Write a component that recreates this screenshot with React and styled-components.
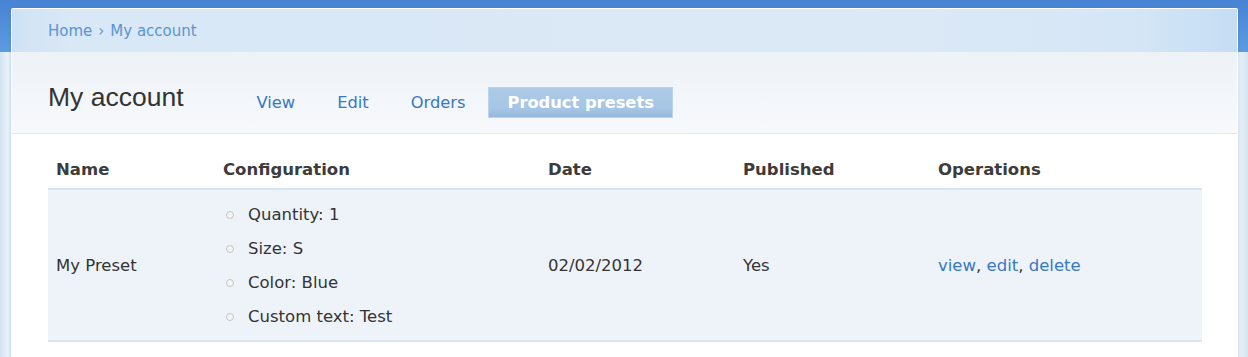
import React from "react"
import styled, {createGlobalStyle} from "styled-components"

const GlobalStyle = createGlobalStyle`
  html, body {
    margin: 0;
    padding: 0;
  }
  body {
    width: 1248px;
    height: 357px;
    overflow: hidden;
    font-family: "DejaVu Sans", Verdana, sans-serif;
    background: #e6eff7;
  }
`

const rows = [
  {
    name: "My Preset",
    config: ["Quantity: 1", "Size: S", "Color: Blue", "Custom text: Test"],
    date: "02/02/2012",
    published: "Yes",
  },
]

const App = () => {
  return (
    <>
      <GlobalStyle/>
      <Page>
        <Panel>
          <Breadcrumb>
            <Crumb href="#">Home</Crumb>
            <Sep>›</Sep>
            <Crumb href="#">My account</Crumb>
          </Breadcrumb>
          <Header>
            <Title>My account</Title>
            <Tabs>
              <Tab href="#">View</Tab>
              <Tab href="#">Edit</Tab>
              <Tab href="#">Orders</Tab>
              <Tab href="#" $active>Product presets</Tab>
            </Tabs>
          </Header>
          <Content>
            <Table>
              <colgroup>
                <col style={{width: "167px"}}/>
                <col style={{width: "325px"}}/>
                <col style={{width: "195px"}}/>
                <col style={{width: "195px"}}/>
                <col style={{width: "272px"}}/>
              </colgroup>
              <thead>
                <tr>
                  <Th>Name</Th>
                  <Th>Configuration</Th>
                  <Th>Date</Th>
                  <Th>Published</Th>
                  <Th>Operations</Th>
                </tr>
              </thead>
              <tbody>
                {rows.map((r) => (
                  <Row key={r.name}>
                    <Td>{r.name}</Td>
                    <Td>
                      <ConfigList>
                        {r.config.map((c) => <ConfigItem key={c}>{c}</ConfigItem>)}
                      </ConfigList>
                    </Td>
                    <Td>{r.date}</Td>
                    <Td>{r.published}</Td>
                    <Td>
                      <OpLink href="#">view</OpLink>, <OpLink href="#">edit</OpLink>, <OpLink href="#">delete</OpLink>
                    </Td>
                  </Row>
                ))}
              </tbody>
            </Table>
          </Content>
        </Panel>
      </Page>
    </>
  )
}

const Page = styled.div`
  width: 1248px;
  height: 357px;
  padding: 8px 10px 0 11px;
  box-sizing: border-box;
  background:
    linear-gradient(to bottom, #4883d4 0, #5c9be0 52px, transparent 52px),
    linear-gradient(to right, #d3e3f2 0, #eaf2f9 8px, #dce8f4 11px, #e9f1f8 1238px, #d6e4f1 1248px);
`

const Panel = styled.div`
  background: #fff;
  height: 100%;
  border-left: 1px solid rgba(255, 255, 255, 0.7);
  border-right: 1px solid rgba(255, 255, 255, 0.7);
  border-top: 1px solid rgba(255, 255, 255, 0.6);
  border-radius: 2px 2px 0 0;
  box-shadow: 0 0 3px rgba(60, 110, 170, 0.25);
  box-sizing: border-box;
`

const Breadcrumb = styled.div`
  height: 43px;
  display: flex;
  align-items: center;
  gap: 6px;
  padding-left: 36px;
  padding-top: 1px;
  box-sizing: border-box;
  background: linear-gradient(to right, #cfe2f5 0, #d9e8f6 60px, #dbe9f6 900px, #d5e6f6 1120px, #c4ddf4 1226px);
  font-size: 15px;
`

const Crumb = styled.a`
  color: #5a94d2;
  text-decoration: none;
`

const Sep = styled.span`
  color: #5a94d2;
`

const Header = styled.div`
  height: 82px;
  display: flex;
  align-items: flex-start;
  padding-left: 36px;
  background: linear-gradient(to bottom, #edf2f7, #f7f9fc);
  border-bottom: 1px solid #e2e9f0;
  box-sizing: border-box;
`

const Title = styled.h1`
  margin: 29px 54px 0 0;
  font-family: "Liberation Sans", Arial, sans-serif;
  font-weight: normal;
  font-size: 26.5px;
  line-height: 32px;
  color: #333;
`

const Tabs = styled.nav`
  display: flex;
  gap: 4px;
  margin-top: 35px;
`

const Tab = styled.a`
  height: 31px;
  display: flex;
  align-items: center;
  padding: 0 18px;
  font-size: 16.3px;
  font-weight: ${(p) => (p.$active ? "bold" : "normal")};
  color: ${(p) => (p.$active ? "#fff" : "#3877c4")};
  text-decoration: none;
  box-sizing: border-box;
  background: ${(p) => (p.$active ? "linear-gradient(to bottom, #adcbe6, #a6c6e4 70%, #94b9de)" : "transparent")};
  border: ${(p) => (p.$active ? "1px solid #bad4ec" : "1px solid transparent")};
`

const Content = styled.div`
  padding: 14px 36px 0 36px;
`

const Table = styled.table`
  width: 1154px;
  table-layout: fixed;
  border-collapse: collapse;
  font-size: 16.5px;
  color: #333;
`

const Th = styled.th`
  text-align: left;
  padding: 12px 8px 8px 8px;
  line-height: 20px;
  font-weight: bold;
  color: #3c3c3c;
  border-bottom: 2px solid #d6e5f2;
`

const Row = styled.tr`
  background: #eef3fa;
  border-bottom: 2px solid #d9e6f2;
`

const Td = styled.td`
  padding: 8px 8px 6px 8px;
  line-height: 20px;
  vertical-align: middle;
`

const ConfigList = styled.ul`
  list-style: none;
  margin: 0;
  padding: 0;
`

const ConfigItem = styled.li`
  position: relative;
  padding: 7px 0 7px 25px;
  line-height: 20px;

  &::before {
    content: "";
    position: absolute;
    left: 3px;
    top: 13px;
    width: 6px;
    height: 6px;
    border: 1px solid #c4c4c4;
    background: #f4f4f4;
    border-radius: 50%;
  }
`

const OpLink = styled.a`
  color: #3877c4;
  text-decoration: none;
`

export default App
